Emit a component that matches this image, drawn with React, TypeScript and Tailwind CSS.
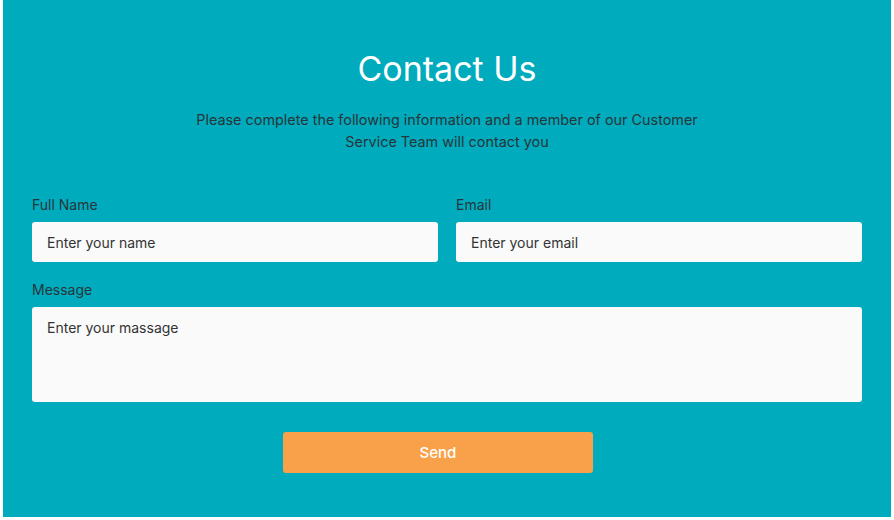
import React from "react";

const Field: React.FC<{ label: string; placeholder: string; type?: string }> = ({
  label,
  placeholder,
  type = "text",
}) => (
  <label className="flex flex-col">
    <span className="text-[14px] leading-[20px] text-[#26363a] mb-[7px]">{label}</span>
    <input
      type={type}
      placeholder={placeholder}
      className="h-[40px] w-full rounded-[3px] bg-[#fafafa] px-[15px] text-[14px] text-[#333] placeholder:text-[#333] outline-none"
    />
  </label>
);

export default function App() {
  return (
    <div className="bg-white pl-[3px] pr-[3px] pb-[3px] font-['Inter',sans-serif]">
      <div className="h-[517px] bg-[#00abbd] px-[29px] pt-[49px]">
        <h1 className="text-center text-[34px] leading-[40px] text-white">Contact Us</h1>
        <p className="mx-auto mt-[20px] max-w-[520px] text-center text-[14.4px] leading-[22px] text-[#26363a]">
          Please complete the following information and a member of our Customer Service Team will
          contact you
        </p>

        <form className="mt-[42px]" onSubmit={(e) => e.preventDefault()}>
          <div className="grid grid-cols-2 gap-[18px]">
            <Field label="Full Name" placeholder="Enter your name" />
            <Field label="Email" placeholder="Enter your email" type="email" />
          </div>

          <label className="mt-[18px] flex flex-col">
            <span className="text-[14px] leading-[20px] text-[#26363a] mb-[7px]">Message</span>
            <textarea
              placeholder="Enter your massage"
              className="h-[95px] w-full resize-none rounded-[3px] bg-[#fafafa] px-[15px] py-[10px] text-[14px] text-[#333] placeholder:text-[#333] outline-none"
            />
          </label>

          <div className="mt-[30px] flex justify-center pr-[18px]">
            <button
              type="submit"
              className="h-[41px] w-[310px] rounded-[3px] bg-[#f9a14a] pt-px text-[15px] font-medium text-white"
            >
              Send
            </button>
          </div>
        </form>
      </div>
    </div>
  );
}
